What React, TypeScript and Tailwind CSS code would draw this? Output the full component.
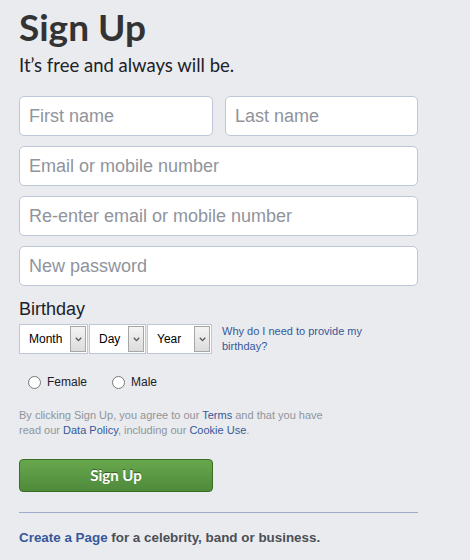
import React from "react";

function Field({ placeholder, className = "" }: { placeholder: string; className?: string }) {
  return (
    <input
      placeholder={placeholder}
      className={`h-[40px] rounded-[5px] border border-[#bdc7d8] bg-white px-[9px] text-[18px] text-[#1d2129] placeholder:text-[#90949c] focus:outline-0 ${className}`}
    />
  );
}

function Picker({ label, width }: { label: string; width: string }) {
  return (
    <div className={`flex h-[30px] items-stretch border border-[#bdc7d8] bg-white ${width}`}>
      <span className="flex flex-1 items-center pl-[9px] text-[12px] text-black">{label}</span>
      <span className="m-px flex w-[16px] items-center justify-center border border-[#a6a6a6] bg-gradient-to-b from-[#f4f4f4] to-[#dcdcdc]">
        <svg width="7" height="5" viewBox="0 0 7 5">
          <path d="M0.8 0.8 L3.5 3.6 L6.2 0.8" fill="none" stroke="#555" strokeWidth="1.3" />
        </svg>
      </span>
    </div>
  );
}

export default function App() {
  return (
    <div className="min-h-[560px] w-[470px] bg-[#e9ebee] pl-[19px] pt-[4px] font-['Liberation_Sans',Arial,sans-serif]">
      <h1 className="font-['Lato',sans-serif] text-[37px] font-bold leading-[46px] text-[#333]">Sign Up</h1>
      <p className="mt-[3px] font-['Lato',sans-serif] text-[18.5px] leading-[24px] text-[#1d2129]">It’s free and always will be.</p>

      <form className="mt-[19px] flex w-[399px] flex-col gap-[10px]">
        <div className="flex gap-[12px]">
          <Field placeholder="First name" className="w-[194px]" />
          <Field placeholder="Last name" className="w-[193px]" />
        </div>
        <Field placeholder="Email or mobile number" />
        <Field placeholder="Re-enter email or mobile number" />
        <Field placeholder="New password" />
      </form>

      <div className="mt-[12px] text-[18px] leading-[22px] text-[#1d2129]">Birthday</div>
      <div className="mt-[4px] flex items-start">
        <div className="flex gap-[1px]">
          <Picker label="Month" width="w-[69px]" />
          <Picker label="Day" width="w-[57px]" />
          <Picker label="Year" width="w-[65px]" />
        </div>
        <a className="ml-[10px] mt-0 w-[160px] text-[11px] leading-[15px] text-[#365899]">Why do I need to provide my birthday?</a>
      </div>

      <div className="mt-[19px] flex items-center pl-[9px] text-[12px] text-[#1d2129]">
        <label className="flex items-center">
          <input type="radio" name="sex" className="m-0 h-[13px] w-[13px]" />
          <span className="ml-[6px]">Female</span>
        </label>
        <label className="ml-[25px] flex items-center">
          <input type="radio" name="sex" className="m-0 h-[13px] w-[13px]" />
          <span className="ml-[6px]">Male</span>
        </label>
      </div>

      <p className="mt-[17px] w-[305px] text-[11px] leading-[15px] text-[#90949c]">
        By clicking Sign Up, you agree to our <a className="text-[#365899]">Terms</a> and that you have read our{" "}
        <a className="text-[#365899]">Data Policy</a>, including our <a className="text-[#365899]">Cookie Use</a>.
      </p>

      <button className="mt-[21px] h-[33px] w-[194px] rounded-[4px] border border-[#3b6e22] bg-gradient-to-b from-[#69a74e] to-[#4e8a3a] font-['Lato',sans-serif] text-[15px] font-bold text-white [text-shadow:0_-1px_0_#355e23]">
        Sign Up
      </button>

      <hr className="mt-[20px] w-[399px] border-0 border-t border-[#9daccb]" />

      <p className="mt-[16px] text-[13.4px] font-bold leading-[18px] text-[#4b4f56]">
        <a className="text-[#365899]">Create a Page</a> for a celebrity, band or business.
      </p>
    </div>
  );
}
